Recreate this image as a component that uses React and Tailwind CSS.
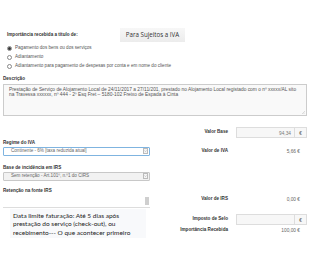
import { useState } from 'react'

function Radio({ checked, label }) {
  return (
    <label className="flex items-center gap-[3px] h-[9px] pl-[7px]">
      <span className="w-[5px] h-[5px] rounded-full border-[0.5px] border-[#888] bg-white flex items-center justify-center">
        {checked && <span className="w-[3px] h-[3px] rounded-full bg-[#333]" />}
      </span>
      <span className="text-[4.6px] text-[#555]">{label}</span>
    </label>
  )
}

function Label({ children, className = '' }) {
  return <p className={`text-[4.6px] font-bold text-[#333] leading-none ${className}`}>{children}</p>
}

function Select({ value, focused, disabled }) {
  return (
    <div className={`h-[9px] flex items-center border-[0.5px] rounded-[1px]
      ${focused ? 'border-[#7fb4e0] bg-white' : 'border-[#c8c8c8]'}
      ${disabled ? 'bg-[#f2f2f2]' : ''}`}>
      <span className="flex-1 pl-[7px] text-[4.6px] text-[#666] truncate">{value}</span>
      <span className="w-[5px] h-[6px] mr-[1px] border-[0.5px] border-[#bbb] bg-[#f4f4f4] flex items-center justify-center">
        <svg viewBox="0 0 6 4" className="w-[3px] h-[2px]">
          <path d="M1 1l2 2 2-2" fill="none" stroke="#888" strokeWidth="0.8" />
        </svg>
      </span>
    </div>
  )
}

function Amount({ label, value }) {
  return (
    <div className="flex items-center h-[11px]">
      <span className="w-[48px] text-[4.6px] font-bold text-[#333] text-right">{label}</span>
      <span className="flex-1 text-right pr-[7px] text-[4.8px] text-[#666]">{value}</span>
    </div>
  )
}

function EuroInput({ label, value }) {
  return (
    <div className="flex items-center h-[11px]">
      <span className="w-[48px] text-right text-[4.6px] font-bold text-[#333]">{label}</span>
      <div className="ml-[8px] flex-1 h-[11px] flex border-[0.5px] border-[#ddd] bg-[#f7f7f7]">
        <span className="flex-1 text-right pr-[3px] text-[4.8px] text-[#777] leading-[11px]">{value}</span>
        <span className="w-[12px] border-l-[0.5px] border-[#ddd] text-center text-[4.8px] text-[#555] leading-[11px]">€</span>
      </div>
    </div>
  )
}

export default function App() {
  const [tipo] = useState(0)

  return (
    <div className="w-[321px] h-[273px] bg-white overflow-hidden font-['Liberation_Sans',Arial,sans-serif]">
      <div className="pt-[28px] flex items-center">
        <Label className="pl-[7px] w-[120px]">Importância recebida a título de:</Label>
        <div className="w-[65px] h-[14px] flex items-center justify-center bg-gradient-to-b from-[#f7f7f7] to-[#ececec] text-[6.2px] text-[#333] font-['Open_Sans',sans-serif]">
          Para Sujeitos a IVA
        </div>
      </div>

      <div className="pt-[2px]">
        <Radio checked={tipo === 0} label="Pagamento dos bens ou dos serviços" />
        <Radio checked={tipo === 1} label="Adiantamento" />
        <Radio checked={tipo === 2} label="Adiantamento para pagamento de despesas por conta e em nome do cliente" />
      </div>

      <Label className="pl-[3px] pt-[6px]">Descrição</Label>
      <div className="mx-[3px] mt-[2px] w-[304px] h-[32px] border-[0.5px] border-[#ccc] bg-[#f9f9f9] px-[5px] pt-[2px] text-[4.85px] leading-[5.8px] text-[#555] relative">
        Prestação de Serviço de Alojamento Local de 24/11/2017 a 27/11/201, prestado no Alojamento Local registado com o nº xxxxx/AL sito na Travessa xxxxxx, nº 444 - 2º Esq Fret – 5180-102 Freixo de Espada à Cinta
        <svg viewBox="0 0 4 4" className="absolute right-[1px] bottom-[1px] w-[3px] h-[3px]">
          <path d="M4 0L0 4M4 2L2 4" stroke="#aaa" strokeWidth="0.5" />
        </svg>
      </div>

      <div className="flex pt-[11px]">
        <div className="w-[147px] ml-[3px] pt-[14px]">
          <Label className="pb-[1.5px]">Regime do IVA</Label>
          <Select value="Continente - 6% [taxa reduzida atual]" focused />
          <Label className="pt-[10px] pb-[1.5px]">Base de incidência em IRS</Label>
          <Select value="Sem retenção - Art.101º, n.º1 do CIRS" disabled />
          <Label className="pt-[8px] pb-[1.5px]">Retenção na fonte IRS</Label>
          <div className="h-[13px] border-b-[0.5px] border-[#ddd] flex justify-end items-center pr-[1px]">
            <span className="w-[4px] h-[8px] bg-[#cfcfcf]" />
          </div>
          <div className="mt-[1px] ml-[7px] w-[136px] bg-[#f8f9fb] pl-[3px] pt-[3px] text-[6.5px] leading-[8.6px] text-[#222] font-['Lato',sans-serif]">
            Data limite faturação: Até 5 dias após prestação do serviço (check-out), ou recebimento--- O que acontecer primeiro
          </div>
        </div>

        <div className="w-[127px] ml-[30px]">
          <EuroInput label="Valor Base" value="94,34" />
          <div className="pt-[8px]">
            <Amount label="Valor de IVA" value="5,66 €" />
          </div>
          <div className="pt-[37px]">
            <Amount label="Valor de IRS" value="0,00 €" />
          </div>
          <div className="pt-[9px]">
            <EuroInput label="Imposto de Selo" value="" />
          </div>
          <Amount label="Importância Recebida" value="100,00 €" />
        </div>
      </div>
    </div>
  )
}
